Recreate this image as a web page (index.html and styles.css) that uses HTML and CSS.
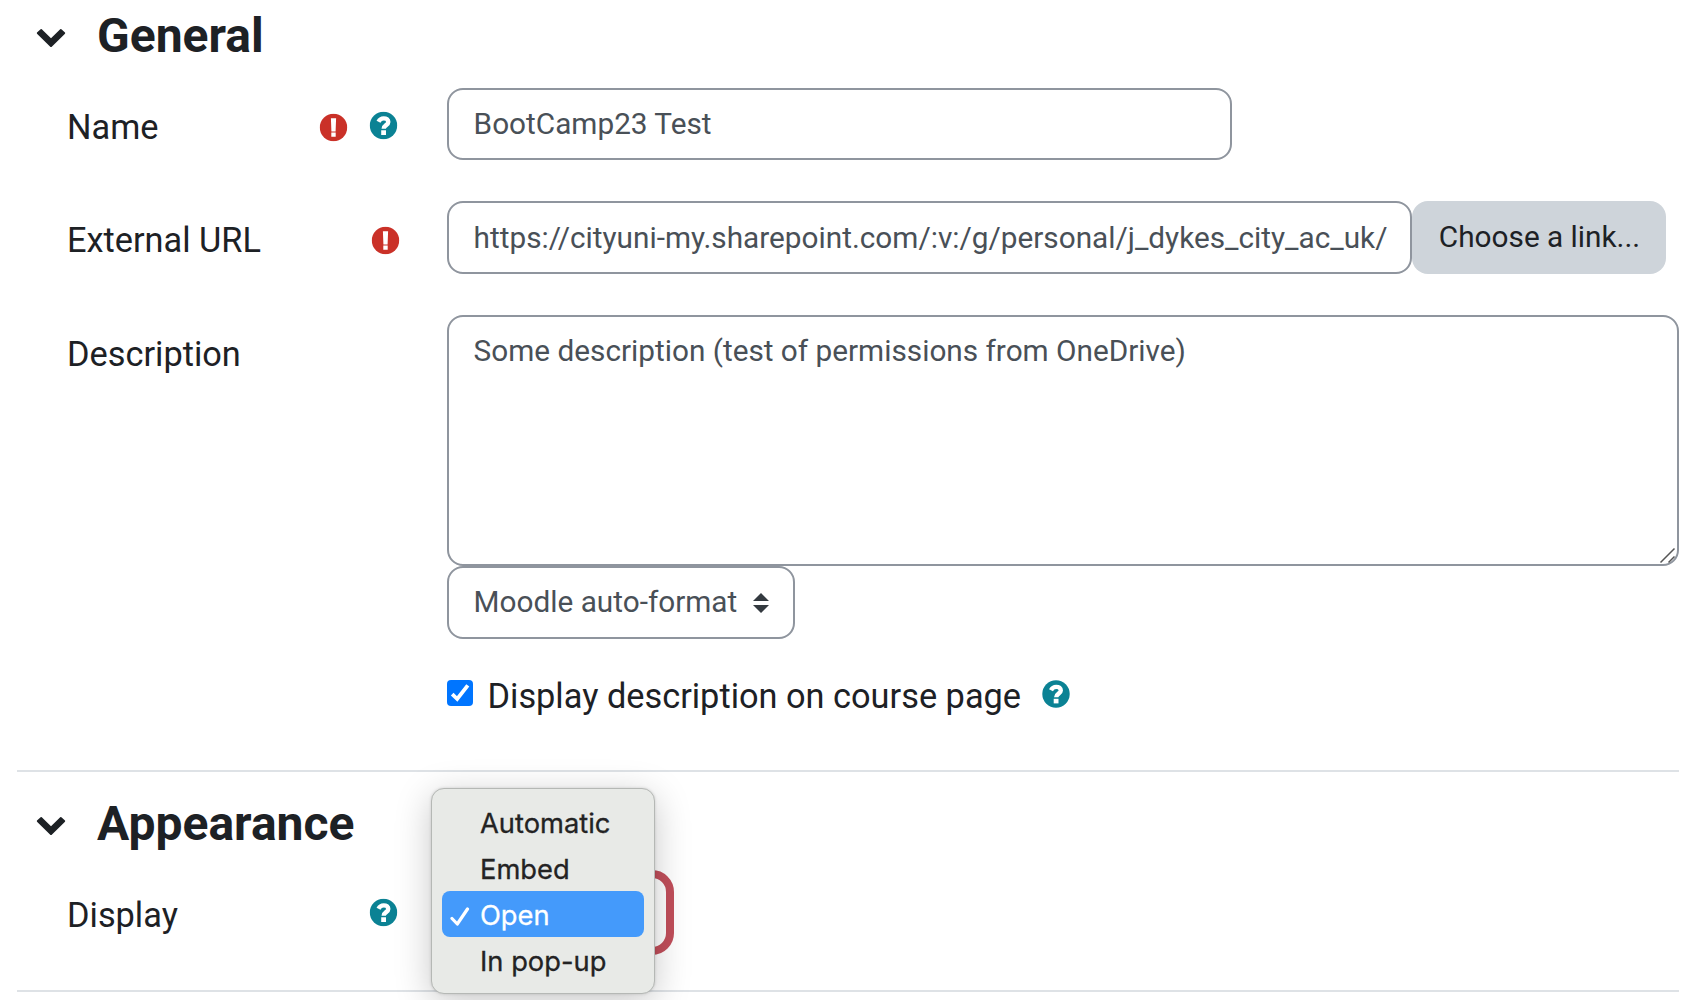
FILE: index.html
```html
<!DOCTYPE html>
<html lang="en">
<head>
<meta charset="utf-8">
<title>External URL settings</title>
<link rel="stylesheet" href="styles.css">
</head>
<body>
<svg class="defs" aria-hidden="true">
  <symbol id="chevron" viewBox="0 0 30 20"><path d="M1 4.6 4.6 1.2Q5.2.7 5.8 1.2L15 10.2 24.2 1.2Q24.8.7 25.4 1.2L29 4.6Q29.4 5.2 29 5.8L15.5 18.9Q15 19.3 14.5 18.9L1 5.8Q.6 5.2 1 4.6Z" fill="#1d2125"/></symbol>
  <symbol id="required" viewBox="0 0 28 28"><circle cx="14" cy="14" r="13.7" fill="#ca3128"/><path d="M11.4 4.8h5.2l-.5 13.1h-4.2zM11.8 19h4.4v4.2h-4.4z" fill="#fff"/></symbol>
  <symbol id="help" viewBox="0 0 28 28"><circle cx="14" cy="14" r="13.7" fill="#0b8294"/><path d="M9 10.2C10.2 7.8 11.8 6.9 14.2 6.9c2.8 0 4.6 1.4 4.6 3.5 0 3.3-4.6 3.2-4.6 6.9" fill="none" stroke="#fff" stroke-width="4.4"/><path d="M11.7 18.8h4.8v4.6h-4.8z" fill="#fff"/></symbol>
</svg>
<main class="form">
  <section class="section general">
    <header class="heading"><svg class="chevron"><use href="#chevron"/></svg><h2>General</h2></header>
    <div class="row name-row">
      <div class="label"><span>Name</span><span class="marks"><svg class="icon required"><use href="#required"/></svg><svg class="icon help"><use href="#help"/></svg></span></div>
      <div class="box name-box"><span class="name-text">BootCamp23 Test</span></div>
    </div>
    <div class="row url-row">
      <div class="label"><span class="url-label">External URL</span><span class="marks solo"><svg class="icon required"><use href="#required"/></svg></span></div>
      <div class="group">
        <div class="box url-box"><span class="url-text">https://cityuni-my.sharepoint.com/:v:/g/personal/j_dykes_city_ac_uk/</span></div>
        <button class="choose"><span>Choose a link...</span></button>
      </div>
    </div>
    <div class="row description-row">
      <div class="label"><span class="description-label">Description</span></div>
      <div class="editor">
        <div class="box area"><span class="area-text">Some description (test of permissions from OneDrive)</span>
          <svg class="grip" viewBox="0 0 18 18"><path d="M1.5 15.5 15.5 1.5M9.5 15.5 15.5 9.5" stroke="#555" stroke-width="1.5"/></svg>
        </div>
        <div class="box format"><span class="format-text">Moodle auto-format</span><svg class="arrows" viewBox="0 0 16 20"><path d="M0 8 8 0l8 8zM0 12h16l-8 8z" fill="#343a40"/></svg></div>
        <div class="check-line">
          <svg class="checkbox" viewBox="0 0 26 26"><rect width="26" height="26" rx="4" fill="#0075ff"/><path d="M5.2 14.2 10.2 19 20.8 5.4" fill="none" stroke="#fff" stroke-width="3.8"/></svg>
          <span class="check-text">Display description on course page</span>
          <svg class="icon check-help"><use href="#help"/></svg>
        </div>
      </div>
    </div>
  </section>
  <section class="section appearance">
    <header class="heading"><svg class="chevron"><use href="#chevron"/></svg><h2>Appearance</h2></header>
    <div class="row display-row">
      <div class="label"><span class="display-label">Display</span><span class="marks"><svg class="icon help"><use href="#help"/></svg></span></div>
      <div class="select-anchor">
        <div class="highlight"></div>
        <ul class="menu">
          <li><span class="o1">Automatic</span></li>
          <li><span class="o2">Embed</span></li>
          <li class="selected"><svg class="tick" viewBox="0 0 20 20"><path d="M2 11.5 7.3 17 17.5 2" fill="none" stroke="#fff" stroke-width="3.2" stroke-linecap="round" stroke-linejoin="round"/></svg><span class="o3">Open</span></li>
          <li><span class="o4">In pop-up</span></li>
        </ul>
      </div>
    </div>
  </section>
</main>
</body>
</html>
```
FILE: styles.css
```css
* { box-sizing: border-box; }
body { margin: 0; width: 1700px; height: 1000px; overflow: hidden; background: #fff; color: #1d2125; font: 34.35px/40px Roboto, "Liberation Sans", sans-serif; }
svg { display: block; flex: none; }
.defs { position: absolute; width: 0; height: 0; }
.form { padding: 0 21px 0 17px; }
.section { border-bottom: 2px solid #dee2e6; }
.general { height: 772px; }
.appearance { height: 220px; }
.heading { display: flex; padding-left: 19px; height: 88px; }
.chevron { width: 30px; height: 20px; margin-top: 28px; }
h2 { margin: 7px 0 0 31px; font-size: 48px; line-height: 58px; font-weight: 700; white-space: nowrap; }
.row { display: grid; grid-template-columns: 380px 1232px; padding-left: 50px; white-space: nowrap; }
.name-row { height: 113px; }
.url-row { height: 114px; }
.label { display: flex; justify-content: space-between; height: 40px; margin-top: 19px; padding-right: 50px; }
.marks { display: flex; gap: 22px; padding-top: 4px; }
.icon { width: 28px; height: 28px; overflow: visible; }
.marks .icon use { transform: translate(.5px, .5px); }
.solo { margin-right: -2px; padding-top: 6px; }
.marks .icon { margin-left: -.5px; margin-right: .5px; }
.name-row .required { margin-top: 2px; }
.box { border: 2px solid #8f959e; border-radius: 16px; background: #fff; padding: 16px 25px 16px 24.6px; color: #495057; font-size: 29.75px; line-height: 36px; }
.name-box { width: 785px; height: 72px; }
.url-box { width: 965px; height: 73px; padding-top: 17px; }
.group { display: flex; }
.choose { width: 254px; height: 73px; border: 0; border-radius: 16px; background: #ced4da; color: #1d2125; font: 29.75px/36px Roboto, sans-serif; padding: 0 0 2px 1px; white-space: nowrap; }
.area { position: relative; width: 1232px; height: 251px; }
.grip { position: absolute; right: 0; bottom: -1px; width: 18px; height: 18px; }
.format { display: flex; width: 348px; height: 73px; }
.arrows { width: 16px; height: 20px; margin: 9px 0 0 15.5px; }
.check-line { display: flex; padding-top: 41px; }
.checkbox { width: 26px; height: 26px; }
.check-text { margin: -4px 0 0 14.5px; }
.check-help { margin: -.5px 0 0 20.5px; }
.appearance .heading { height: 105px; padding-top: 16px; }
.display-row .label { margin-top: 18px; }
.display-row .marks { padding-top: 3px; }
.select-anchor { position: relative; }
.highlight { position: absolute; left: -10px; top: -7px; width: 237px; height: 85px; border: 8px solid #c24f5b; border-radius: 22px; }
.menu { position: absolute; left: -16px; top: -89px; width: 224px; height: 206px; margin: 0; padding: 10px; list-style: none; border: 1px solid #b5b8b5; border-radius: 13px; background: #e8eae7; box-shadow: 0 8px 36px rgba(0,0,0,.22), 0 0 3px rgba(0,0,0,.15); color: #232323; font: 27.3px/50px Inter, sans-serif; -webkit-text-stroke: .3px; }
.menu li { display: flex; height: 46px; padding-left: 38px; }
.menu .selected { background: #449afb; color: #fff; border-radius: 8px; padding-left: 8px; }
.tick { width: 20px; height: 20px; margin: 16px 10px 0 0; }
```
